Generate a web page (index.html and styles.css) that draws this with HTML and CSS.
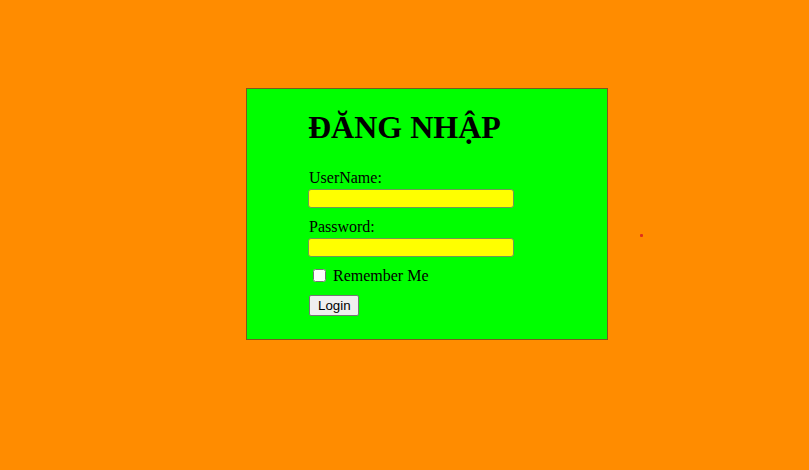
FILE: index.html
```html
<!DOCTYPE html>
<html lang="vi">
<head>
<meta charset="utf-8">
<title>Đăng nhập</title>
<link rel="stylesheet" href="styles.css">
</head>
<body>
<div class="page">
  <form class="login-box">
    <h1 class="title">ĐĂNG NHẬP</h1>
    <label class="field-label" for="user">UserName:</label>
    <input class="field-input" id="user" type="text">
    <label class="field-label" for="pass">Password:</label>
    <input class="field-input" id="pass" type="password">
    <label class="remember"><input class="remember-box" type="checkbox"> Remember Me</label>
    <button class="login-btn" type="button">Login</button>
  </form>
  <span class="dot"></span>
</div>
</body>
</html>
```
FILE: styles.css
```css
html, body {
  margin: 0;
  padding: 0;
  background: #ff8c00;
}
body {
  width: 809px;
  height: 470px;
  font-family: "Liberation Serif", "Times New Roman", serif;
  font-size: 16px;
  color: #000;
}
.page {
  position: relative;
  width: 809px;
  height: 470px;
  padding-top: 88px;
  padding-left: 246px;
  box-sizing: border-box;
}
.login-box {
  width: 362px;
  height: 252px;
  box-sizing: border-box;
  background: #00ff00;
  border: 1px solid #7a5a1e;
  padding: 0 0 0 61px;
  display: flex;
  flex-direction: column;
  align-items: flex-start;
}
.title {
  margin: 16px 0 20px 0;
  font-size: 32px;
  font-weight: bold;
  line-height: 44px;
  height: 44px;
}
.field-label {
  display: block;
  line-height: 18px;
  margin-left: 1px;
}
.field-input {
  width: 206px;
  height: 19px;
  box-sizing: border-box;
  margin: 2px 0 10px 0;
  background: #ffff00;
  border: 1px solid #6f9a55;
  border-radius: 3px;
  padding: 0 2px;
}
.remember {
  display: flex;
  align-items: flex-start;
  line-height: 18px;
  margin-left: 1px;
}
.remember-box {
  width: 13px;
  height: 13px;
  margin: 2px 7px 4px 4px;
}
.login-btn {
  margin-top: 9px;
  margin-left: 1px;
  font-family: "Liberation Sans", Arial, sans-serif;
  font-size: 13.333px;
  padding: 1px 7px 1px 8px;
  height: 21px;
  background: #efefef;
  border: 1px solid #767676;
  border-radius: 2px;
  color: #000;
}
.dot {
  position: absolute;
  left: 640px;
  top: 234px;
  width: 3px;
  height: 3px;
  background: #e0301a;
  border-radius: 1px;
}
```
